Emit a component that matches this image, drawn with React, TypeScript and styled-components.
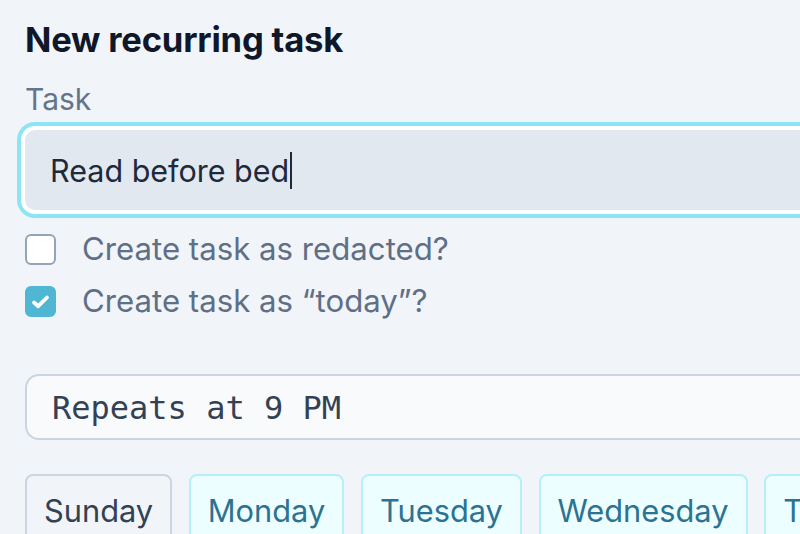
import React from "react";
import styled, { createGlobalStyle } from "styled-components";

const Global = createGlobalStyle`
  html, body {
    margin: 0;
    padding: 0;
    background: #f1f5f9;
    overflow: hidden;
  }
  body {
    font-family: Inter, "Noto Sans", sans-serif;
    -webkit-font-smoothing: antialiased;
  }
`;

const Page = styled.div`
  width: 1000px;
  padding: 15px 0 0 25px;
  box-sizing: border-box;
  display: flex;
  flex-direction: column;
  & > * {
    flex-shrink: 0;
  }
`;

const Title = styled.h1`
  margin: 0;
  font-size: 34.6px;
  font-weight: 700;
  line-height: 48px;
  color: #0f172a;
  letter-spacing: -0.2px;
`;

const Label = styled.label`
  margin-top: 16px;
  font-size: 30px;
  line-height: 40px;
  color: #64748b;
  font-weight: 400;
`;

const InputBox = styled.div`
  margin-top: 11px;
  height: 80px;
  box-sizing: border-box;
  padding: 0 24px 0 25px;
  display: flex;
  align-items: center;
  background: #e2e8f0;
  border-radius: 10px;
  box-shadow: 0 0 0 4px #ffffff, 0 0 0 8px #8be5f5;
  font-size: 30.5px;
  color: #1e293b;
`;

const Caret = styled.span`
  display: inline-block;
  width: 2px;
  height: 37px;
  background: #1e293b;
  margin-left: 1px;
`;

const Checks = styled.div`
  margin-top: 24px;
  display: flex;
  flex-direction: column;
  gap: 21px;
`;

const CheckRow = styled.div`
  display: flex;
  align-items: center;
  gap: 26px;
  height: 31px;
`;

const Box = styled.span<{ $checked?: boolean }>`
  width: 31px;
  height: 31px;
  box-sizing: border-box;
  border-radius: 6px;
  display: flex;
  align-items: center;
  justify-content: center;
  background: ${(p) => (p.$checked ? "#4fb6d3" : "#ffffff")};
  border: 2px solid ${(p) => (p.$checked ? "#4fb6d3" : "#94a3b8")};
`;

const CheckText = styled.span`
  font-size: 31.2px;
  color: #5f6f86;
  line-height: 31px;
`;

const Repeats = styled.div`
  margin-top: 57px;
  height: 66px;
  box-sizing: border-box;
  border: 2px solid #cbd5e1;
  border-radius: 14px;
  background: #f8fafc;
  display: flex;
  align-items: center;
  padding: 2px 24px 0 25px;
  font-family: "DejaVu Sans Mono", "Liberation Mono", monospace;
  font-size: 32px;
  color: #334155;
`;

const Days = styled.div`
  margin-top: 34px;
  display: flex;
  gap: 16.6px;
`;

const Day = styled.button<{ $active?: boolean }>`
  font-family: Inter, "Noto Sans", sans-serif;
  font-size: 30.8px;
  height: 76px;
  padding: 11px 17px 0;
  display: flex;
  align-items: flex-start;
  line-height: 48px;
  border-radius: 8px;
  box-sizing: border-box;
  border: 2px solid ${(p) => (p.$active ? "#cbd5e1" : "#b4f0fa")};
  background: ${(p) => (p.$active ? "#f1f5f9" : "#ecfeff")};
  color: ${(p) => (p.$active ? "#334155" : "#2c7391")};
  flex: none;
`;

const Check = () => (
  <svg width="19" height="16" viewBox="0 0 19 16">
    <path d="M3 8.5 L7.2 12.2 L16 3.5" fill="none" stroke="#fff" strokeWidth="3.8" strokeLinecap="round" strokeLinejoin="round" />
  </svg>
);

export default function App() {
  const days = ["Sunday", "Monday", "Tuesday", "Wednesday", "Thursday"];
  return (
    <>
      <Global />
      <Page>
        <Title>New recurring task</Title>
        <Label>Task</Label>
        <InputBox>
          Read before bed
          <Caret />
        </InputBox>
        <Checks>
          <CheckRow>
            <Box />
            <CheckText>Create task as redacted?</CheckText>
          </CheckRow>
          <CheckRow>
            <Box $checked>
              <Check />
            </Box>
            <CheckText>Create task as “today”?</CheckText>
          </CheckRow>
        </Checks>
        <Repeats>Repeats at 9 PM</Repeats>
        <Days>
          {days.map((d, i) => (
            <Day key={d} $active={i === 0}>
              {d}
            </Day>
          ))}
        </Days>
      </Page>
    </>
  );
}
